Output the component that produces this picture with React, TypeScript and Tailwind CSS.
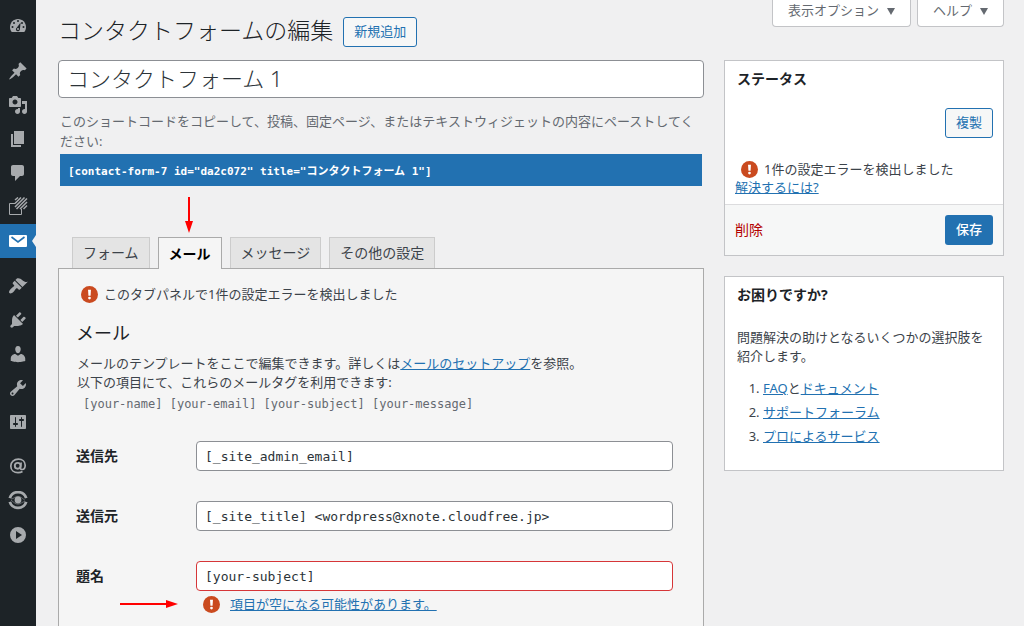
import React, { useState } from 'react';

interface MenuItem {
    label: string;
    icon: React.ReactNode;
    current?: boolean;
}

interface MailField {
    id: string;
    label: string;
    value: string;
    error?: string;
}

const Glyph: React.FC<{ d: string }> = ({ d }) => (
    <svg viewBox="0 0 20 20" className="size-5" fill="currentColor" aria-hidden="true">
        <path d={d} />
    </svg>
);

// Top level menu, split into groups that have a gap between them
const menuGroups: MenuItem[][] = [
    [
        {
            label: 'ダッシュボード',
            icon: (
                <svg viewBox="0 0 20 20" className="size-5" aria-hidden="true">
                    <path d="M3.76 16h12.48c1.1-1.37 1.76-3.11 1.76-5 0-4.42-3.58-8-8-8s-8 3.58-8 8c0 1.89.66 3.63 1.76 5z" fill="currentColor" />
                    <g fill="#1d2327">
                        <circle cx="10" cy="5" r="1" />
                        <circle cx="6" cy="7" r="1" />
                        <circle cx="14" cy="7" r="1" />
                        <circle cx="4.500" cy="11" r="1" />
                        <circle cx="15.500" cy="11" r="1" />
                        <path d="M12.600 6.500l-.700 6.800a2 2 0 1 1-3.200-1.600z" />
                    </g>
                    <circle cx="10" cy="13" r="1" fill="currentColor" />
                </svg>
            ),
        },
    ],
    [
        {
            label: '投稿',
            icon: <Glyph d="M10.44 3.02l1.82-1.82 6.36 6.35-1.83 1.82c-1.05-.68-2.48-.57-3.41.36l-.75.75c-.92.93-1.04 2.35-.35 3.41l-1.83 1.82-2.41-2.41-2.8 2.79c-.42.42-3.38 2.71-3.8 2.29s1.86-3.39 2.28-3.81l2.79-2.79L4.1 9.36l1.83-1.82c1.05.69 2.48.57 3.4-.36l.75-.75c.93-.92 1.05-2.35.36-3.41z" />,
        },
        {
            label: 'メディア',
            icon: <Glyph d="M13 11V4c0-.55-.45-1-1-1h-1.67L9 1H5L3.67 3H2c-.55 0-1 .45-1 1v7c0 .55.45 1 1 1h10c.55 0 1-.45 1-1zM7 4.5c1.38 0 2.5 1.12 2.5 2.5S8.38 9.5 7 9.5 4.5 8.38 4.5 7 5.62 4.5 7 4.5zM14 6h5v10.5c0 1.38-1.12 2.5-2.5 2.5S14 17.88 14 16.5s1.12-2.5 2.5-2.5c.17 0 .34.02.5.05V9h-3V6zm-4 8.05V13h2v3.5c0 1.38-1.12 2.5-2.5 2.5S7 17.88 7 16.5 8.12 14 9.5 14c.17 0 .34.02.5.05z" />,
        },
        { label: '固定ページ', icon: <Glyph d="M6 15V2h10v13H6zm-1 1h8v2H3V5h2v11z" /> },
        {
            label: 'コメント',
            icon: <Glyph d="M5 2h9c1.1 0 2 .9 2 2v7c0 1.1-.9 2-2 2h-2l-5 5v-5H5c-1.1 0-2-.9-2-2V4c0-1.1.9-2 2-2z" />,
        },
        {
            label: 'ブロック',
            icon: (
                <svg viewBox="0 0 20 20" className="size-5" fill="none" stroke="currentColor" aria-hidden="true">
                    <path d="M7 6.500H1.500v11h12V12" />
                    <path d="M7 3l3-2.500M7 6.500l6-6M7 10l9.500-9.500M8.500 12L19 1.500M12 12l7-7M15.500 12L19 8.500" strokeWidth="1.500" />
                </svg>
            ),
        },
        {
            label: 'お問い合わせ',
            current: true,
            icon: (
                <svg viewBox="0 0 20 20" className="size-5" aria-hidden="true">
                    <rect x="1" y="4" width="18" height="12" rx="1" fill="#fff" />
                    <path d="M3.500 6l6.500 5 6.500-5" fill="none" stroke="#2271b1" strokeWidth="1.600" />
                </svg>
            ),
        },
    ],
    [
        {
            label: '外観',
            icon: <Glyph d="M14.48 11.06L7.41 3.99l1.5-1.5c.5-.56 2.3-.47 3.51.32 1.21.8 1.43 1.28 2.91 2.1 1.18.64 2.45 1.26 4.45.85zm-.71.71L6.7 4.7 4.93 6.47c-.39.39-.39 1.02 0 1.41l1.06 1.06c.39.39.39 1.03 0 1.42-.6.6-1.43 1.11-2.21 1.69-.35.26-.7.53-1.01.84C1.43 14.23.4 16.08 1.4 17.07c.99 1 2.84-.03 4.18-1.36.31-.31.58-.66.85-1.02.57-.78 1.08-1.61 1.69-2.21.39-.39 1.02-.39 1.41 0l1.06 1.06c.39.39 1.02.39 1.41 0z" />,
        },
        {
            label: 'プラグイン',
            icon: <Glyph d="M13.11 4.36L9.87 7.6 8 5.73l3.24-3.24c.35-.34 1.05-.2 1.56.32.52.51.66 1.21.31 1.55zm-8 1.77l.91-1.12 9.01 9.01-1.19.84c-.71.71-2.63 1.16-3.82 1.16H6.14L4.9 17.26c-.59.59-1.54.59-2.12 0-.59-.58-.59-1.53 0-2.12l1.24-1.24v-3.88c0-1.13.4-3.19 1.09-3.89zm7.26 3.97l3.24-3.24c.34-.35 1.04-.21 1.55.31.52.51.66 1.21.31 1.55l-3.24 3.25z" />,
        },
        {
            label: 'ユーザー',
            icon: <Glyph d="M10 9.25c-2.27 0-2.73-3.44-2.73-3.44C7 4.02 7.82 2 9.97 2c2.16 0 2.98 2.02 2.71 3.81 0 0-.41 3.44-2.68 3.44zm0 2.57L12.72 10c2.39 0 4.52 2.33 4.52 4.53v2.49s-3.65 1.13-7.24 1.13c-3.65 0-7.24-1.13-7.24-1.13v-2.49c0-2.25 1.94-4.48 4.47-4.48z" />,
        },
        {
            label: 'ツール',
            icon: <Glyph d="M16.68 9.77c-1.34 1.34-3.3 1.67-4.95.99l-5.41 6.52c-.99.99-2.59.99-3.58 0s-.99-2.59 0-3.57l6.52-5.42c-.68-1.65-.35-3.61.99-4.95 1.28-1.28 3.12-1.62 4.72-1.06l-2.89 2.89 2.82 2.82 2.86-2.87c.53 1.58.18 3.39-1.08 4.65zM3.81 16.21c.4.39 1.04.39 1.43 0 .4-.4.4-1.04 0-1.43-.39-.4-1.03-.4-1.43 0-.39.39-.39 1.03 0 1.43z" />,
        },
        {
            label: '設定',
            icon: <Glyph d="M18 16V4c0-.55-.45-1-1-1H3c-.55 0-1 .45-1 1v12c0 .55.45 1 1 1h14c.55 0 1-.45 1-1zM8 11h1c.55 0 1 .45 1 1s-.45 1-1 1H8v1.5c0 .28-.22.5-.5.5s-.5-.22-.5-.5V13H6c-.55 0-1-.45-1-1s.45-1 1-1h1V5.5c0-.28.22-.5.5-.5s.5.22.5.5V11zm5-2h-1c-.55 0-1-.45-1-1s.45-1 1-1h1V5.5c0-.28.22-.5.5-.5s.5.22.5.5V7h1c.55 0 1 .45 1 1s-.45 1-1 1h-1v5.5c0 .28-.22.5-.5.5s-.5-.22-.5-.5V9z" />,
        },
    ],
    [
        {
            label: 'メール設定',
            icon: (
                <svg viewBox="0 0 20 20" className="size-5" fill="none" stroke="currentColor" aria-hidden="true">
                    <circle cx="9.700" cy="8.800" r="2.900" strokeWidth="1.900" />
                    <path d="M13.200 5.500l-.7 4.800c-.2 1.700.6 2.300 1.600 2.200 1.900-.2 3.100-2 3.100-4.300 0-3.500-2.800-6-6.800-6-4.400 0-7.600 3-7.600 6.800 0 4.200 3.200 6.700 7.200 6.700 1.700 0 3.200-.4 4.500-1.200" strokeWidth="1.700" />
                </svg>
            ),
        },
        {
            label: '表示設定',
            icon: (
                <svg viewBox="0 0 20 20" className="size-5" fill="none" stroke="currentColor" aria-hidden="true">
                    <path d="M1.800 7.200a8.600 8.600 0 0 1 16.400 0M1.800 10.800a8.600 8.600 0 0 0 16.400 0" strokeWidth="2.800" />
                    <path d="M3 8c3-.2 4-2.600 7-2.600 2.500 0 4 1.600 7 4M17 10.500c-3 .2-4 2.600-7 2.600-2.500 0-4-1.600-7-4" strokeWidth="1" opacity=".5" />
                    <circle cx="10" cy="9" r="3.400" fill="currentColor" stroke="none" />
                </svg>
            ),
        },
        {
            label: 'メニューを閉じる',
            icon: <Glyph d="M10 2a8 8 0 1 0 0 16 8 8 0 0 0 0-16zM8 6l6 4-6 4V6z" />,
        },
    ],
];

const tabs = ['フォーム', 'メール', 'メッセージ', 'その他の設定'];

const mailFields: MailField[] = [
    { id: 'recipient', label: '送信先', value: '[_site_admin_email]' },
    { id: 'sender', label: '送信元', value: '[_site_title] <wordpress@xnote.cloudfree.jp>' },
    { id: 'subject', label: '題名', value: '[your-subject]', error: '項目が空になる可能性があります。' },
];

const WarningIcon = () => (
    <svg viewBox="2 2 16 16" className="size-[17px] shrink-0" aria-hidden="true">
        <circle cx="10" cy="10" r="8" fill="#ca4a1f" />
        <path d="M8.600 5.500h2.800l-.4 5.600H9z" fill="#fff" />
        <circle cx="10" cy="13.300" r="1.300" fill="#fff" />
    </svg>
);

const Sidebar = () => (
    <nav className="w-9 shrink-0 bg-[#1d2327] text-[#a7aaad] pt-[9px] flex flex-col gap-[11px]" aria-label="メインメニュー">
        {menuGroups.map((group, i) => (
            <ul key={i}>
                {group.map((item) => (
                    <li key={item.label} className={item.current ? 'relative bg-[#2271b1]' : ''}>
                        <a href="#" aria-label={item.label} className="h-[34px] flex items-center justify-center">
                            {item.icon}
                        </a>
                        {item.current && (
                            <svg viewBox="0 0 4 12" className="absolute right-0 top-[11px] w-1 h-3" aria-hidden="true">
                                <path d="M4 0v12L0 6z" fill="#f0f0f1" />
                            </svg>
                        )}
                    </li>
                ))}
            </ul>
        ))}
    </nav>
);

const StatusBox = () => (
    <section className="bg-white border border-[#c3c4c7]">
        <h2 className="px-3 pt-2 text-sm leading-5 font-bold text-[#1d2327]">ステータス</h2>
        <div className="flex justify-end px-[10px] pt-[19px]">
            <button className="h-[30px] px-[10px] rounded-[3px] border border-[#2271b1] bg-[#f6f7f7] text-[#2271b1]">複製</button>
        </div>
        <div className="px-[10px] pt-[22px] pb-2 leading-[18px]">
            <p className="flex items-center gap-[6px] pl-[6px]">
                <WarningIcon />
                1件の設定エラーを検出しました
            </p>
            <a href="#" className="text-[#2271b1] underline">解決するには?</a>
        </div>
        <div className="flex items-center justify-between border-t border-[#dcdcde] bg-[#f6f7f7] px-[10px] py-[10px]">
            <button className="text-sm text-[#b30000]">削除</button>
            <button className="h-[30px] px-[11px] rounded-[3px] bg-[#2271b1] text-white font-medium">保存</button>
        </div>
    </section>
);

const HelpBox = () => (
    <section className="bg-white border border-[#c3c4c7] px-3 pt-2 pb-[22px]">
        <h2 className="text-sm leading-5 font-bold text-[#1d2327]">お困りですか?</h2>
        <p className="pt-[23px] leading-[19px]">問題解決の助けとなるいくつかの選択肢を紹介します。</p>
        <ol className="list-decimal pl-[26px] pt-[10px] leading-6">
            <li>
                <a href="#" className="text-[#2271b1] underline">FAQ</a>と
                <a href="#" className="text-[#2271b1] underline">ドキュメント</a>
            </li>
            <li><a href="#" className="text-[#2271b1] underline">サポートフォーラム</a></li>
            <li><a href="#" className="text-[#2271b1] underline">プロによるサービス</a></li>
        </ol>
    </section>
);

const MailPanel = () => (
    <div role="tabpanel" className="relative flex-1 border border-b-0 border-[#aaa] bg-[#f5f5f5] px-[17px] pt-4">
        <p className="flex items-center gap-[6px] pl-[5px] leading-[18px]">
            <WarningIcon />
            このタブパネルで1件の設定エラーを検出しました
        </p>
        <h2 className="pt-[18px] text-lg leading-6 text-[#1d2327]">メール</h2>
        <div className="pt-[9px] pl-px leading-[19px]">
            <p>
                メールのテンプレートをここで編集できます。詳しくは
                <a href="#" className="text-[#2271b1] underline">メールのセットアップ</a>を参照。
            </p>
            <p>以下の項目にて、これらのメールタグを利用できます:</p>
        </div>
        <p className="pt-[3px] pl-[7px] font-['DejaVu_Sans_Mono',monospace] text-xs leading-[18px] text-[#646970]">
            [your-name] [your-email] [your-subject] [your-message]
        </p>
        <div className="flex flex-col gap-[30px] pt-[28px]">
            {mailFields.map((field) => (
                <div key={field.id} className="grid grid-cols-[120px_1fr] items-center pr-[13px]">
                    <label htmlFor={field.id} className="text-sm font-bold text-[#1d2327]">{field.label}</label>
                    <input
                        id={field.id}
                        type="text"
                        defaultValue={field.value}
                        className={`h-[30px] w-full rounded border bg-white px-2 font-['DejaVu_Sans_Mono',monospace] text-[13px] text-[#2c3338] ${field.error ? 'border-[#d63638]' : 'border-[#8c8f94]'}`}
                    />
                    {field.error && (
                        <p className="col-start-2 flex items-center gap-[10px] pl-[7px] pt-1 leading-[18px]">
                            <WarningIcon />
                            <a href="#" className="text-[#2271b1] underline">{field.error}</a>
                        </p>
                    )}
                </div>
            ))}
        </div>
        <svg viewBox="0 0 60 10" className="absolute left-[61px] top-[330px] w-[60px] h-[10px]" aria-hidden="true">
            <path d="M0 5h48" stroke="#f00" strokeWidth="2" />
            <path d="M46 1l12 4-12 4z" fill="#f00" />
        </svg>
    </div>
);

const App: React.FC = () => {
    const [activeTab, setActiveTab] = useState('メール');

    return (
        <div className="flex h-screen overflow-hidden bg-[#f0f0f1] font-['Noto_Sans','Noto_Sans_CJK_JP',sans-serif] text-[13px] text-[#3c434a]">
            <Sidebar />
            <main className="flex flex-1 flex-col min-w-0 pl-[22px] pr-5">
                <header className="flex items-start justify-between h-[60px] shrink-0">
                    <div className="flex items-start gap-[10px] pt-[15px]">
                        <h1 className="text-[23px] leading-[30px] font-light text-[#1d2327]">コンタクトフォームの編集</h1>
                        <a href="#" className="flex items-center h-[30px] mt-[2px] px-[10px] rounded-[3px] border border-[#2271b1] bg-[#f6f7f7] text-[#2271b1]">新規追加</a>
                    </div>
                    <div className="flex gap-[6px] text-[#646970]">
                        <button className="flex items-center gap-2 h-[27px] px-[15px] pb-1 rounded-b border border-t-0 border-[#c3c4c7] bg-white">
                            表示オプション
                            <svg viewBox="0 0 8 7" className="w-2 h-[7px]" aria-hidden="true"><path d="M0 0h8L4 7z" fill="currentColor" /></svg>
                        </button>
                        <button className="flex items-center gap-2 h-[27px] px-[15px] pb-1 rounded-b border border-t-0 border-[#c3c4c7] bg-white">
                            ヘルプ
                            <svg viewBox="0 0 8 7" className="w-2 h-[7px]" aria-hidden="true"><path d="M0 0h8L4 7z" fill="currentColor" /></svg>
                        </button>
                    </div>
                </header>
                <div className="flex flex-1 min-h-0 gap-5">
                    <div className="flex flex-1 flex-col min-w-0">
                        <input
                            type="text"
                            aria-label="タイトル"
                            defaultValue="コンタクトフォーム 1"
                            className="h-[38px] w-full shrink-0 rounded border border-[#8c8f94] bg-white px-2 pb-1 text-[22px] font-light text-[#2c3338]"
                        />
                        <div className="px-[2px] pt-[13px]">
                            <label htmlFor="shortcode" className="block leading-5 text-[#646970]">
                                このショートコードをコピーして、投稿、固定ページ、またはテキストウィジェットの内容にペーストしてください:
                            </label>
                            <input
                                id="shortcode"
                                type="text"
                                readOnly
                                value={'[contact-form-7 id="da2c072" title="コンタクトフォーム 1"]'}
                                className="block w-full h-8 mt-[3px] px-2 bg-[#2271b1] text-white font-['DejaVu_Sans_Mono','Noto_Sans_CJK_JP',monospace] text-[11px] font-bold"
                            />
                        </div>
                        <div className="relative flex gap-2 pl-[14px] pt-[51px]" role="tablist">
                            {tabs.map((tab) => (
                                <button
                                    key={tab}
                                    role="tab"
                                    aria-selected={tab === activeTab}
                                    onClick={() => setActiveTab(tab)}
                                    className={
                                        tab === activeTab
                                            ? 'z-10 -mb-px h-8 px-[10px] text-sm font-bold border border-b-0 border-[#aaa] bg-[#f5f5f5] text-black'
                                            : 'h-[31px] px-[10px] text-sm border border-b-0 border-[#ccc] bg-[#e4e4e4] text-[#3c434a]'
                                    }
                                >
                                    {tab}
                                </button>
                            ))}
                            <svg viewBox="0 0 10 38" className="absolute left-[126px] top-[11px] w-[10px] h-[38px]" aria-hidden="true">
                                <path d="M5 0v26" stroke="#f00" strokeWidth="2" />
                                <path d="M1 24h8L5 36z" fill="#f00" />
                            </svg>
                        </div>
                        <MailPanel />
                    </div>
                    <aside className="flex w-[280px] shrink-0 flex-col gap-5">
                        <StatusBox />
                        <HelpBox />
                    </aside>
                </div>
            </main>
        </div>
    );
};

export default App;
